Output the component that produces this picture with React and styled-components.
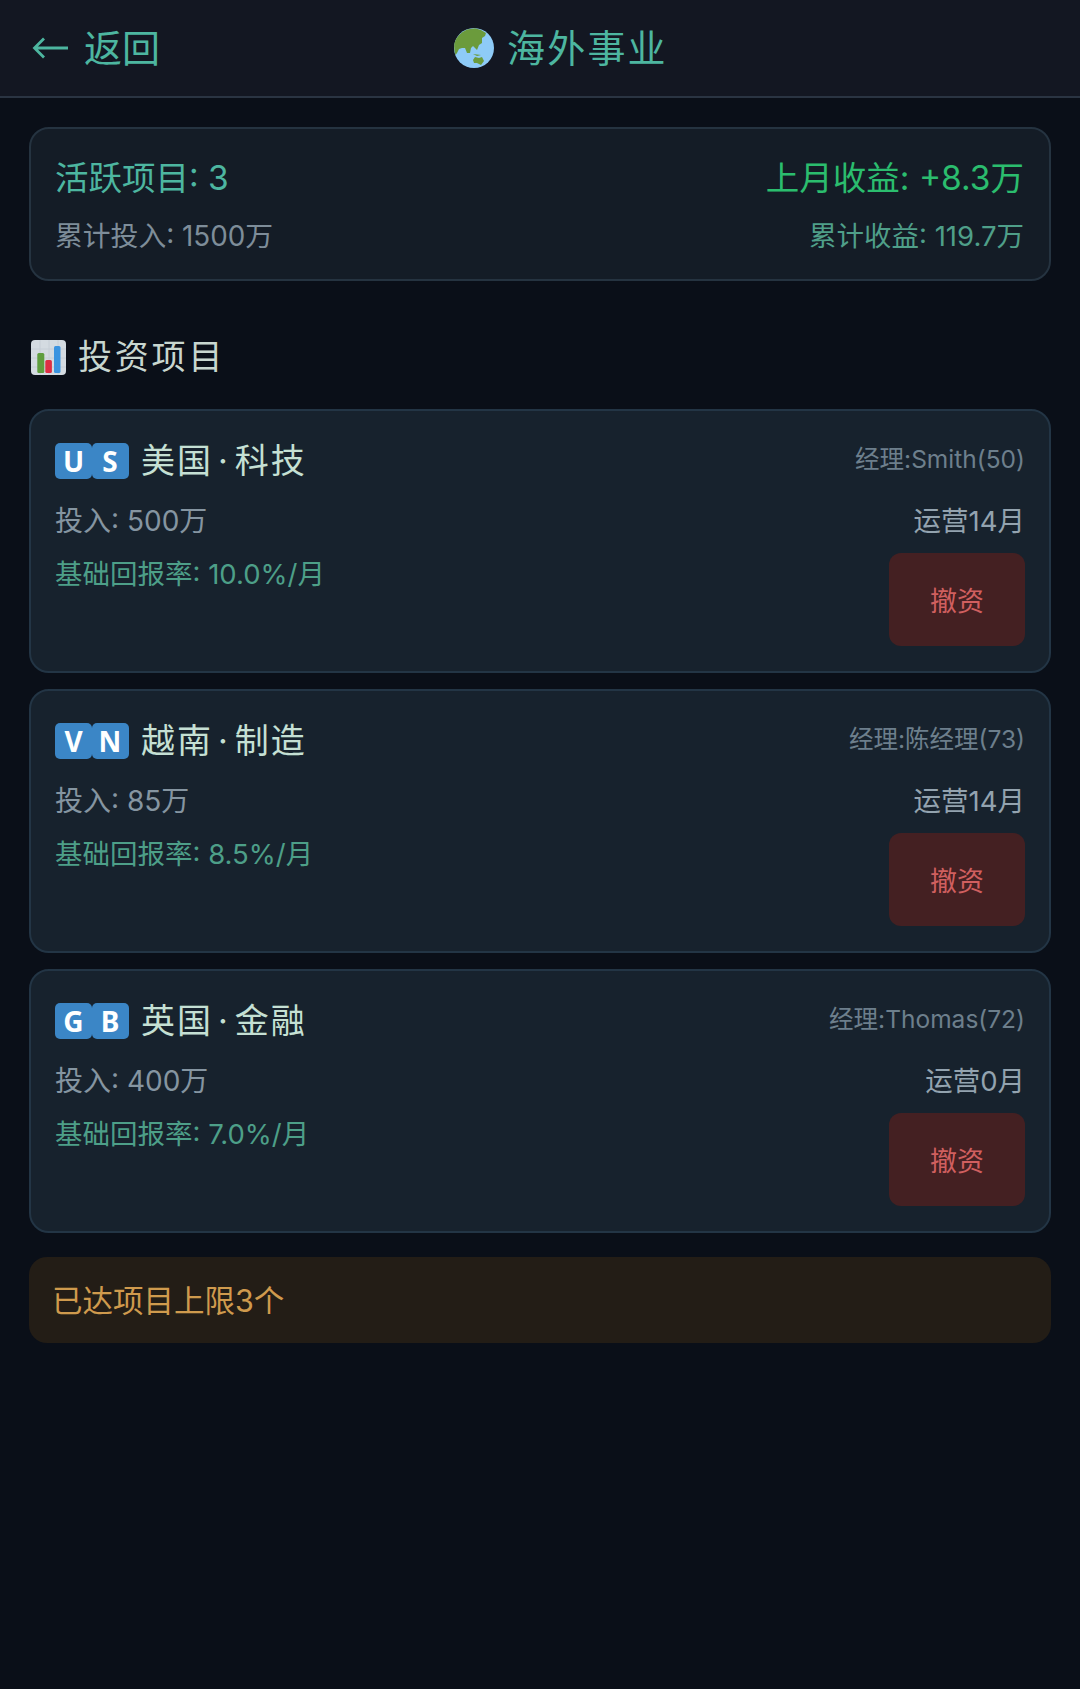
import React from "react";
import styled, { createGlobalStyle } from "styled-components";

const GlobalStyle = createGlobalStyle`
  html, body {
    margin: 0;
    padding: 0;
    background: #0a0f18;
  }
  body {
    font-family: "Inter", "Noto Sans CJK SC", sans-serif;
  }
  * {
    box-sizing: border-box;
  }
`;

const Page = styled.div`
  width: 1080px;
  height: 1689px;
  overflow: hidden;
  background: #0a0f18;
`;

const Header = styled.header`
  display: flex;
  align-items: center;
  height: 98px;
  padding: 0 32px;
  background: #131722;
  border-bottom: 2px solid #2a3442;
`;

const BackButton = styled.div`
  display: flex;
  align-items: center;
  gap: 16px;
  color: #4db6a0;
  font-size: 38px;
  line-height: 48px;
`;

const Title = styled.h1`
  display: flex;
  align-items: center;
  gap: 13px;
  margin: 0 0 0 294px;
  color: #4db6a0;
  font-size: 38px;
  font-weight: 400;
  line-height: 48px;
  letter-spacing: 2.2px;
`;

const Content = styled.main`
  display: flex;
  flex-direction: column;
  padding: 29px 29px 0 29px;
`;

const SummaryCard = styled.section`
  display: flex;
  flex-direction: column;
  gap: 21px;
  height: 154px;
  padding: 30px 25px 0 24px;
  background: #141c26;
  border: 2px solid #253340;
  border-radius: 20px;
`;

const Row = styled.div`
  display: flex;
  justify-content: space-between;
  align-items: center;
`;

const SummaryText = styled.span`
  color: ${(p) => p.$color};
  font-size: ${(p) => p.$size}px;
  line-height: ${(p) => p.$size + 6}px;
`;

const SectionTitle = styled.h2`
  display: flex;
  align-items: center;
  gap: 12px;
  margin: 54px 0 30px 2px;
  color: #c8d6cf;
  font-size: 34px;
  font-weight: 400;
  line-height: 44px;
  letter-spacing: 2.800px;
`;

const ProjectList = styled.div`
  display: flex;
  flex-direction: column;
  gap: 16px;
`;

const ProjectCard = styled.article`
  display: flex;
  flex-direction: column;
  height: 264px;
  padding: 32px 24px 0 24px;
  background: #17222d;
  border: 2px solid #233545;
  border-radius: 20px;
`;

const ProjectName = styled.div`
  display: flex;
  align-items: center;
  gap: 13px;
  height: 36px;
  color: #c5e0d4;
  font-size: 34px;
  line-height: 36px;
  letter-spacing: 2px;
`;

const NameDot = styled.span`
  margin: 0 5px;
`;

const Flag = styled.span`
  display: flex;
`;

const FlagTile = styled.span`
  display: flex;
  align-items: center;
  justify-content: center;
  width: 37px;
  height: 36px;
  margin-right: -0.5px;
  background: #3b86c6;
  border-radius: 5px;
  color: #fff;
  font-family: "Noto Sans", sans-serif;
  font-size: 28px;
  font-weight: 700;
  letter-spacing: 0;
`;

const Manager = styled.span`
  padding-bottom: 5px;
  color: #6d7f8c;
  font-size: 24.500px;
  line-height: 28px;
`;

const Detail = styled.div`
  color: ${(p) => p.$color};
  font-size: ${(p) => p.$size}px;
  line-height: 36px;
`;

const DetailRow = styled(Row)`
  margin-top: 24px;
`;

const LowerRow = styled.div`
  display: flex;
  justify-content: space-between;
  align-items: flex-start;
  margin-top: 14px;
`;

const ReturnRate = styled.div`
  margin-top: 3px;
  color: #4d9f88;
  font-size: 27.500px;
  line-height: 36px;
`;

const WithdrawButton = styled.button`
  width: 136px;
  height: 93px;
  padding: 0;
  background: #442022;
  border: none;
  border-radius: 12px;
  color: #d05f5f;
  font-family: inherit;
  font-size: 27px;
`;

const Notice = styled.div`
  display: flex;
  align-items: center;
  height: 86px;
  margin-top: 24px;
  padding-bottom: 2px;
  padding-left: 23px;
  background: #231d16;
  border-radius: 18px;
  color: #cf9a4d;
  font-size: 30.500px;
`;

const Globe = () => (
  <svg width="40" height="40" viewBox="0 0 40 40">
    <circle cx="20" cy="20" r="20" fill="#8ecbf7" />
    <path
      d="M13 1.500L21 .2 27 2 32 5 31 8 28 10 28 15 25 17 23 22 21 20 19 18 17 20 16 25 13 25 11 20 8 20 5 21 3 25 1.500 27Q-.5 20 .5 15 3 6 13 1.500z"
      fill="#6b9b3c"
    />
    <path d="M19 32L21 29 25 30 28 29 30 33 27 37 23 35 20 35z" fill="#6b9b3c" />
    <path d="M19 26L23 28 27 27 23 26.500z" fill="#6b9b3c" />
  </svg>
);

const ChartIcon = () => (
  <svg width="35" height="35" viewBox="0 0 35 35">
    <rect width="35" height="35" rx="4" fill="#d4dbe1" />
    <path d="M0 9h35M0 18h35M0 27h35M9 0v35M18 0v35M27 0v35" stroke="#c6ced6" strokeWidth="1" />
    <rect x="6.300" y="13" width="7" height="20" rx="1.500" fill="#5f9e3e" />
    <rect x="14.300" y="20" width="6.600" height="13" rx="1.500" fill="#dd2e44" />
    <rect x="23" y="6" width="6.500" height="27" rx="1.500" fill="#3b94e0" />
  </svg>
);

const ArrowIcon = () => (
  <svg width="36" height="22" viewBox="0 0 36 22" fill="none" stroke="#4db6a0" strokeWidth="2.800">
    <path d="M36 11H3M12 1.500L2.500 11 12 20.500" />
  </svg>
);

const projects = [
  { flag: ["U", "S"], name: ["美国", "科技"], manager: "经理:Smith(50)", invest: "投入: 500万", months: "运营14月", rate: "基础回报率: 10.0%/月" },
  { flag: ["V", "N"], name: ["越南", "制造"], manager: "经理:陈经理(73)", invest: "投入: 85万", months: "运营14月", rate: "基础回报率: 8.5%/月" },
  { flag: ["G", "B"], name: ["英国", "金融"], manager: "经理:Thomas(72)", invest: "投入: 400万", months: "运营0月", rate: "基础回报率: 7.0%/月" },
];

const ProjectItem = ({ project }) => (
  <ProjectCard>
    <Row>
      <ProjectName>
        <Flag>
          {project.flag.map((letter) => (
            <FlagTile key={letter}>{letter}</FlagTile>
          ))}
        </Flag>
        <span>
          {project.name[0]}
          <NameDot>·</NameDot>
          {project.name[1]}
        </span>
      </ProjectName>
      <Manager>{project.manager}</Manager>
    </Row>
    <DetailRow>
      <Detail $color="#8595a1" $size={28}>{project.invest}</Detail>
      <Detail $color="#93a3af" $size={27.5}>{project.months}</Detail>
    </DetailRow>
    <LowerRow>
      <ReturnRate>{project.rate}</ReturnRate>
      <WithdrawButton>撤资</WithdrawButton>
    </LowerRow>
  </ProjectCard>
);

export default function App() {
  return (
    <Page>
      <GlobalStyle />
      <Header>
        <BackButton>
          <ArrowIcon />
          返回
        </BackButton>
        <Title>
          <Globe />
          海外事业
        </Title>
      </Header>
      <Content>
        <SummaryCard>
          <Row>
            <SummaryText $color="#4db6a0" $size={33.5}>活跃项目: 3</SummaryText>
            <SummaryText $color="#2bbd6e" $size={33.5}>上月收益: +8.3万</SummaryText>
          </Row>
          <Row>
            <SummaryText $color="#7e8d99" $size={27.8}>累计投入: 1500万</SummaryText>
            <SummaryText $color="#4f9f89" $size={27.5}>累计收益: 119.7万</SummaryText>
          </Row>
        </SummaryCard>
        <SectionTitle>
          <ChartIcon />
          投资项目
        </SectionTitle>
        <ProjectList>
          {projects.map((project) => (
            <ProjectItem key={project.name[0]} project={project} />
          ))}
        </ProjectList>
        <Notice>已达项目上限3个</Notice>
      </Content>
    </Page>
  );
}
